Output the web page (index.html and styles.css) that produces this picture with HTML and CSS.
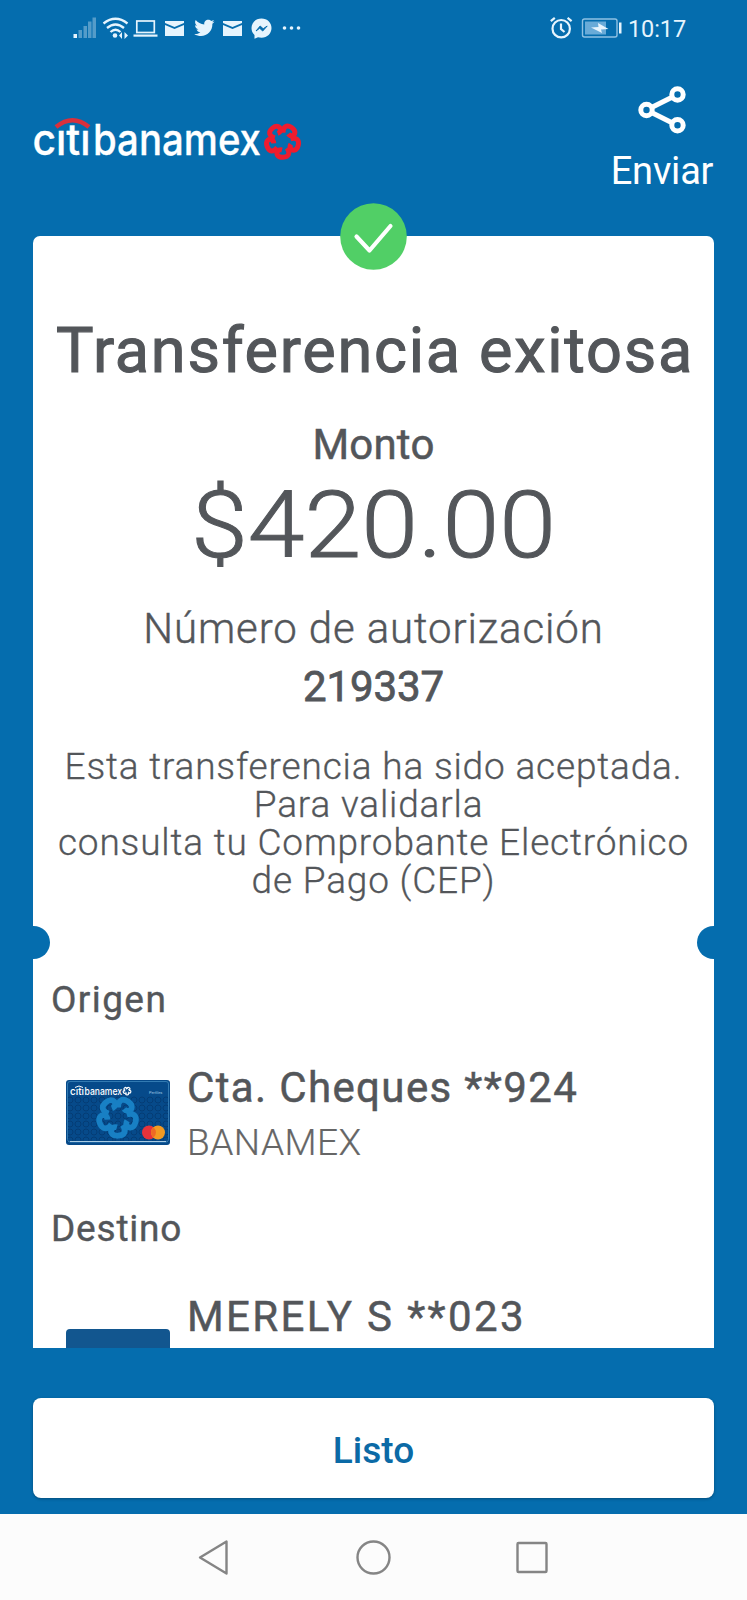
FILE: index.html
```html
<!DOCTYPE html>
<html lang="es">
<head>
<meta charset="utf-8">
<title>Transferencia exitosa</title>
<link rel="stylesheet" href="styles.css">
</head>
<body>
<svg width="0" height="0" class="defs">
  <defs>
    <g id="flower" fill="none" stroke-width="5" stroke-linejoin="round" transform="rotate(180)">
      <g id="petal"><path d="M-4.500 -7C-8 -12 -6.500 -16 -.5 -16.300C5.500 -16.500 6.500 -12.500 4.800 -10Q3 -8.300 .5 -9"/></g>
      <use href="#petal" transform="rotate(72)"/>
      <use href="#petal" transform="rotate(144)"/>
      <use href="#petal" transform="rotate(216)"/>
      <use href="#petal" transform="rotate(288)"/>
    </g>
  </defs>
</svg>
<div class="screen">
  <header class="status">
    <svg class="status-left" width="240" height="40" viewBox="70 8 240 40">
      <g fill="#e6f4fd">
        <rect x="73.500" y="34" width="3.500" height="4"/>
        <g opacity=".35"><rect x="78.500" y="30" width="3.500" height="8"/><rect x="83.500" y="26" width="3.500" height="12"/><rect x="88" y="21.500" width="3.500" height="16.500"/><rect x="92.500" y="17.500" width="3.500" height="20.500"/></g>
        <circle cx="115" cy="35.500" r="2.300"/>
        <path d="M119 35.500l3-3.500v7zM128 35.500l-3.500-3.500v7z"/>
        <path d="M133.500 34.500h24v2.200h-24z"/>
        <path d="M165 21h19v2l-9.500 4-9.500-4zM165 25l9.500 4 9.500-4v11h-19z"/>
        <path d="M223 21h19v2l-9.500 4-9.500-4zM223 25l9.500 4 9.500-4v11h-19z"/>
        <path d="M214.500 21.500c-.8.400-1.500.6-2.400.7.900-.5 1.500-1.300 1.800-2.200-.8.400-1.700.8-2.600 1-2.700-2.900-7.700-.8-7 3.500-3.500-.2-6.500-1.800-8.600-4.400-1.200 2-.6 4.400 1.300 5.600-.7 0-1.300-.2-1.900-.5 0 2 1.400 3.700 3.300 4.100-.6.200-1.200.2-1.900.1.600 1.600 2 2.700 3.900 2.800-2 1.500-4 2-6.200 1.800 8.600 5.200 18.500-.3 18.200-10.200.8-.6 1.500-1.300 2.100-2.300z"/>
        <path d="M261.500 18.500c-6 0-10 4.200-10 9.600 0 2.900 1.100 5.300 3 7v3.700l3.500-1.500c1.100.3 2.300.5 3.500.5 5.800 0 10-4.200 10-9.700s-4.200-9.600-10-9.600z"/>
        <circle cx="284.500" cy="28" r="1.800"/><circle cx="291.500" cy="28" r="1.800"/><circle cx="298.500" cy="28" r="1.800"/>
      </g>
      <g fill="none" stroke="#e6f4fd" stroke-width="2.300">
        <path d="M103.500 23.500q12-9.500 24 0M107 28q8.500-7 17 0M110.500 32q5-4.500 10 0"/>
        <rect x="136.800" y="21" width="17.500" height="11.500" stroke-width="1.700"/>
      </g>
      <path d="M256 31l4.200-5 3 2.800 4-2.800-4.500 5-3-2.800z" fill="#056dae" stroke="#056dae"/>
    </svg>
    <div class="status-right">
      <svg width="76" height="32" viewBox="546 12 76 32">
        <g fill="none" stroke="#e6f4fd" stroke-width="2.200">
          <circle cx="560.200" cy="28.700" r="8.700"/>
          <path d="M560 23.500v5.500l3.500 3M549.800 21.200l4-3.300M570.600 21.200l-4-3.300"/>
        </g>
        <rect x="581.500" y="19" width="34.500" height="18" rx="2" fill="none" stroke="#8fc1e3" stroke-width="1.400"/>
        <rect x="584" y="21.500" width="21" height="13" fill="#69abd8"/>
        <path d="M590 27.500l7.500-.5-.5-4 10.500 6-7.500.5 1 3.500z" fill="#e6f4fd"/>
        <rect x="618" y="22.500" width="2.500" height="11" fill="#e6f4fd"/>
      </svg>
      <span class="clock">10:17</span>
    </div>
  </header>

  <div class="brandbar">
    <svg class="logo" width="274" height="60" viewBox="32 110 274 60">
      <g class="logo-text" fill="#fff">
        <text x="32.500" y="155" textLength="58" lengthAdjust="spacingAndGlyphs">cıtı</text>
        <text x="93" y="155" textLength="168" lengthAdjust="spacingAndGlyphs">banamex</text>
      </g>
      <path d="M56 127q16.500-13.500 33 0" fill="none" stroke="#d9303c" stroke-width="4.500"/>
      <use href="#flower" transform="translate(282.500 141)" stroke="#ee1c2e"/>
    </svg>
    <div class="share">
      <svg width="50" height="50" viewBox="0 0 50 50" fill="none" stroke="#fff" stroke-width="5">
        <circle cx="9.500" cy="25" r="5.700"/><circle cx="40.500" cy="9.500" r="5.700"/><circle cx="40.500" cy="40.300" r="5.700"/>
        <path d="M14.500 22.500L35.500 12M14.500 27.500L35.500 38"/>
      </svg>
      <span>Enviar</span>
    </div>
  </div>

  <main class="receipt">
    <svg class="check" width="67" height="67" viewBox="0 0 67 67"><circle cx="33.500" cy="33.500" r="33.300" fill="#51cf66"/><path d="M16.500 33.500L29.500 47.500L50.500 23" fill="none" stroke="#fff" stroke-width="4.200" stroke-linecap="round" stroke-linejoin="round"/></svg>
    <h1 class="title">Transferencia exitosa</h1>
    <div class="label monto">Monto</div>
    <div class="amount">$420.00</div>
    <div class="auth">Número de autorización</div>
    <div class="label number">219337</div>
    <p class="note">Esta transferencia ha sido aceptada.<br>Para validarla&nbsp;<br>consulta tu Comprobante Electrónico<br>de Pago (CEP)</p>
    <div class="notches"><i></i><i></i></div>
    <h2 class="section origen">Origen</h2>
    <div class="account">
      <svg class="thumb" width="104" height="65" viewBox="0 0 104 65">
        <defs><pattern id="dots" width="8" height="8" patternUnits="userSpaceOnUse"><circle cx="4" cy="4" r="3" fill="none" stroke="#03386f" stroke-width=".8"/></pattern></defs>
        <rect width="104" height="65" rx="3" fill="#064a8a"/>
        <rect y="16" width="104" height="46" fill="url(#dots)"/>
        <rect x="1.500" y="1.500" width="101" height="60.500" rx="2.500" fill="none" stroke="#3d86bd" stroke-width=".8"/>
        <path d="M4 61.500h96" stroke="#a9cce4"/>
        <use href="#flower" transform="translate(51.500 37) scale(1.150)" stroke="#1880c4"/>
        <g class="thumb-logo"><text x="4" y="14.500" textLength="14" lengthAdjust="spacingAndGlyphs">cıtı</text><text x="18.500" y="14.500" textLength="37.500" lengthAdjust="spacingAndGlyphs">banamex</text></g>
        <path d="M9 7.500q4-3 8 0" fill="none" stroke="#fff"/>
        <use href="#flower" transform="translate(61 11) scale(.24)" stroke="#fff"/>
        <text class="thumb-type" x="83" y="14">Perfiles</text>
        <circle cx="83" cy="52.500" r="7" fill="#e5333b"/><circle cx="92" cy="52.500" r="7" fill="#f29a22"/><path d="M87.500 47.200a7 7 0 0 1 0 10.600a7 7 0 0 1 0-10.600" fill="#ee6a24"/>
      </svg>
      <div>
        <div class="name n1">Cta. Cheques **924</div>
        <div class="bank">BANAMEX</div>
      </div>
    </div>
    <h2 class="section destino">Destino</h2>
    <div class="account dest">
      <div class="blank"></div>
      <div class="name n2">MERELY S **023</div>
    </div>
  </main>

  <button class="done">Listo</button>

  <nav class="nav">
    <svg width="747" height="86" viewBox="0 1514 747 86" fill="none" stroke="#858585" stroke-width="2.400" stroke-linejoin="round">
      <path d="M226.500 1541.500V1573.500L200 1557.500Z"/><circle cx="373.500" cy="1557.500" r="16"/><rect x="517.500" y="1543" width="29" height="29" rx="1"/>
    </svg>
  </nav>
</div>
</body>
</html>
```
FILE: styles.css
```css
* { box-sizing: border-box; }
body { margin: 0; font-family: Roboto, "Liberation Sans", sans-serif; }
.defs { position: absolute; }
.screen { width: 747px; height: 1600px; background: #056dae; display: flex; flex-direction: column; overflow: hidden; }
.status { height: 56px; flex: none; display: flex; justify-content: space-between; padding: 8px 61px 0 70px; }
.status-right { display: flex; align-items: flex-start; padding-top: 4px; gap: 5px; color: #e6f4fd; }
.clock { font-size: 23.500px; line-height: 34px; letter-spacing: -.1px; }
.brandbar { height: 180px; flex: none; display: flex; justify-content: space-between; padding: 29px 34px 0 32px; }
.logo { margin-top: 25px; }
.logo-text { font: 500 43px Inter, sans-serif; stroke: #fff; stroke-width: .3px; }
.share { width: 102px; display: flex; flex-direction: column; align-items: center; color: #fff; font-size: 38px; line-height: 44px; letter-spacing: -.2px; }
.share span { margin-top: 14px; white-space: nowrap; }
.receipt { position: relative; flex: none; width: 681px; height: 1112px; margin-left: 33px; background: #fff; border-radius: 7px 7px 0 0; clip-path: inset(-40px 0 0 0); color: #53565a; text-align: center; padding-top: 79px; white-space: nowrap; }
.check { position: absolute; left: 307px; top: -33px; }
.title { margin: 0; font-size: 63px; line-height: 72px; font-weight: 400; letter-spacing: 1.750px; text-indent: 3px; -webkit-text-stroke: 1.100px currentColor; }
.label { font-size: 42px; line-height: 48px; font-weight: 400; -webkit-text-stroke: .5px currentColor; }
.monto { margin-top: 34px; letter-spacing: .2px; }
.amount { margin-top: 7px; font-size: 93px; line-height: 100px; font-weight: 300; transform: scaleX(1.1); -webkit-text-stroke: 1px currentColor; }
.auth { margin-top: 29px; font-size: 42px; line-height: 48px; font-weight: 300; letter-spacing: .870px; -webkit-text-stroke: .4px currentColor; }
.number { margin-top: 10px; letter-spacing: -.1px; -webkit-text-stroke: .8px currentColor; }
.note { margin: 37px 0 0; font-size: 37px; line-height: 38px; font-weight: 300; letter-spacing: .830px; -webkit-text-stroke: .3px currentColor; }
.notches { margin-top: 26px; height: 33px; display: flex; justify-content: space-between; }
.notches i { width: 17px; height: 33px; background: #056dae; border-radius: 0 17px 17px 0; }
.notches i + i { border-radius: 17px 0 0 17px; }
.section { margin: 19px 0 0 18px; font-size: 37px; line-height: 44px; font-weight: 400; text-align: left; letter-spacing: 1.400px; -webkit-text-stroke: .4px currentColor; }
.account { display: flex; margin: 42px 0 0 33px; text-align: left; gap: 17px; }
.thumb { margin-top: 16px; }
.name { font-size: 42px; line-height: 48px; font-weight: 400; letter-spacing: 1.370px; -webkit-text-stroke: .5px currentColor; }
.n2 { letter-spacing: 2.350px; }
.bank { margin-top: 9px; font-size: 37px; line-height: 44px; font-weight: 300; color: #666; letter-spacing: .5px; -webkit-text-stroke: .2px currentColor; }
.thumb-logo { font: 500 10.500px Inter, sans-serif; fill: #fff; }
.thumb-type { font-size: 4px; fill: #9cc4e0; }
.destino { margin-top: 42px; letter-spacing: .8px; }
.blank { width: 104px; height: 65px; margin-top: 36px; border-radius: 4px; background: #12568f; }
.done { flex: none; width: 681px; height: 100px; margin: 50px 0 0 33px; padding: 4px 0 0; border: 0; border-radius: 8px; background: #fff; color: #0b6aa6; font: 500 37px Roboto, sans-serif; box-shadow: 0 1px 3px rgba(0,0,0,.3); }
.nav { margin-top: 16px; height: 86px; background: #fcfcfc; }
```
